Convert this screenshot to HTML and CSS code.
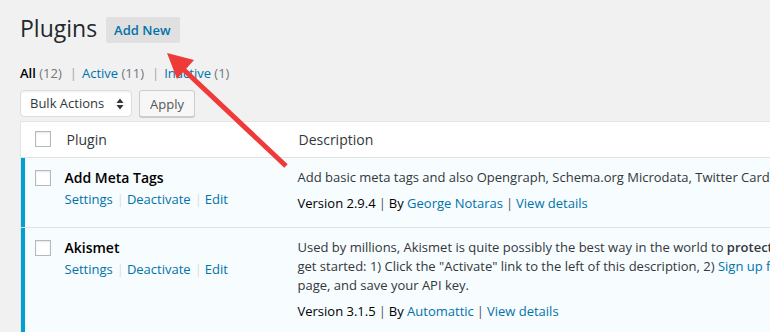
FILE: index.html
```html
<!DOCTYPE html>
<html lang="en">

<head>
    <meta charset="UTF-8">
    <title>Plugins</title>
    <link rel="stylesheet" href="styles.css">
</head>

<body>

    <div class="wrap">
        <div class="page-title">
            <h1>Plugins</h1>
            <a class="title-action">Add New</a>
        </div>

        <!-- Filters -->
        <ul class="subsubsub">
            <li><a class="current">All <span class="count">(12)</span></a><span class="sep">|</span></li>
            <li><a>Active <span class="count">(11)</span></a><span class="sep">|</span></li>
            <li><a>Inactive <span class="count">(1)</span></a></li>
        </ul>

        <!-- Bulk actions -->
        <div class="tablenav">
            <div class="select">
                Bulk Actions
                <svg class="select-arrows" width="8" height="12" viewBox="0 0 8 12">
                    <path d="M4 0.5 L7.5 5 L0.5 5 Z" fill="#32373c" />
                    <path d="M4 11.5 L7.5 7 L0.5 7 Z" fill="#32373c" />
                </svg>
            </div>
            <button class="button">Apply</button>
        </div>

        <!-- Plugins table -->
        <table class="plugins">
            <colgroup>
                <col class="col-check">
                <col class="col-name">
                <col class="col-desc">
            </colgroup>
            <thead>
                <tr>
                    <th class="check-column"><span class="checkbox"></span></th>
                    <th>Plugin</th>
                    <th>Description</th>
                </tr>
            </thead>
            <tbody>
                <tr class="active">
                    <th class="check-column"><span class="checkbox"></span></th>
                    <td class="plugin-title">
                        <strong>Add Meta Tags</strong>
                        <div class="row-actions">
                            <a>Settings</a><span class="sep">|</span><a>Deactivate</a><span class="sep">|</span><a>Edit</a>
                        </div>
                    </td>
                    <td class="plugin-desc">
                        <p>Add basic meta tags and also Opengraph, Schema.org Microdata, Twitter Cards and Dublin Core metadata to your website.</p>
                        <div class="plugin-meta">
                            Version 2.9.4<span class="bar">|</span>By <a>George Notaras</a><span class="bar">|</span><a>View details</a>
                        </div>
                    </td>
                </tr>
                <tr class="active">
                    <th class="check-column"><span class="checkbox"></span></th>
                    <td class="plugin-title">
                        <strong>Akismet</strong>
                        <div class="row-actions">
                            <a>Settings</a><span class="sep">|</span><a>Deactivate</a><span class="sep">|</span><a>Edit</a>
                        </div>
                    </td>
                    <td class="plugin-desc">
                        <p>Used by millions, Akismet is quite possibly the best way in the world to <strong>protect your blog from spam</strong>. It keeps your site protected even while you sleep. To<br>
                            get started: 1) Click the "Activate" link to the left of this description, 2) <a>Sign up for an Akismet plan</a> to get an API key, and 3) Go to your Akismet configuration<br>
                            page, and save your API key.</p>
                        <div class="plugin-meta">
                            Version 3.1.5<span class="bar">|</span>By <a>Automattic</a><span class="bar">|</span><a>View details</a>
                        </div>
                    </td>
                </tr>
            </tbody>
        </table>
    </div>

    <!-- Annotation arrow -->
    <svg class="annotation" width="770" height="332" viewBox="0 0 770 332">
        <line x1="286" y1="166" x2="183" y2="69" stroke="#ef3a3a" stroke-width="5" />
        <polygon points="167,53 194,60 177,79" fill="#ef3a3a" />
    </svg>

</body>

</html>
```

FILE: styles.css
```css
html,
body {
    margin: 0;
    overflow: hidden;
}

body {
    position: relative;
    background-color: #f1f1f1;
    color: #444;
    font-family: 'Open Sans', 'Liberation Sans', sans-serif;
    font-size: 13px;
    line-height: 1.5;
    width: 770px;
    height: 332px;
}

a {
    color: #0073aa;
    text-decoration: none;
}

.wrap {
    padding: 14px 0 0 20px;
}

.page-title {
    display: flex;
    align-items: flex-start;
}

.page-title h1 {
    margin: 0;
    font-size: 23px;
    font-weight: 400;
    line-height: 29px;
    color: #23282d;
}

.title-action {
    margin: 3px 0 0 9px;
    padding: 4px 9px 4px 8px;
    background-color: #e0e0e0;
    border-radius: 2px;
    font-weight: 600;
    line-height: 18px;
}

.subsubsub {
    list-style: none;
    display: flex;
    margin: 20px 0 0;
    padding: 0;
    line-height: 20px;
}

.subsubsub .current {
    color: #000;
    font-weight: 600;
}

.subsubsub .count {
    color: #72777c;
    font-weight: 400;
}

.subsubsub .sep {
    color: #a0a5aa;
    margin: 0 5px 0 8px;
}

.tablenav {
    display: flex;
    gap: 7px;
    margin-top: 7px;
    height: 27px;
}

.select {
    box-sizing: border-box;
    width: 112px;
    height: 27px;
    display: flex;
    align-items: center;
    justify-content: space-between;
    padding: 0 7px 0 9px;
    background-color: #fff;
    border: 1px solid #ddd;
    border-radius: 4px;
    box-shadow: inset 0 1px 2px rgba(0, 0, 0, .07);
    color: #32373c;
}

.button {
    box-sizing: border-box;
    height: 27px;
    padding: 0 10px;
    background-color: #f7f7f7;
    border: 1px solid #ccc;
    border-radius: 3px;
    box-shadow: 0 1px 0 #ccc;
    color: #555;
    font-family: inherit;
    font-size: 13px;
}

.plugins {
    margin-top: 4px;
    width: 1080px;
    table-layout: fixed;
    border-collapse: collapse;
    background-color: #fff;
    border: 1px solid #e5e5e5;
}

.col-check {
    width: 36px;
}

.col-name {
    width: 232px;
}

.plugins th,
.plugins td {
    text-align: left;
    vertical-align: top;
    font-weight: 400;
}

.plugins thead th {
    padding: 8px 10px;
    color: #32373c;
    font-size: 14px;
    line-height: 19px;
    border-bottom: 1px solid #e1e1e1;
}

.plugins thead th.check-column {
    padding: 9px 0 0 14px;
}

.plugins tbody tr {
    background-color: #f7fcfe;
    border-bottom: 1px solid #e1e1e1;
}

.plugins tbody th.check-column {
    padding: 12px 0 0 14px;
    box-shadow: inset 4px 0 0 #00a0d2;
}

.checkbox {
    display: block;
    box-sizing: border-box;
    width: 16px;
    height: 16px;
    background-color: #fff;
    border: 1px solid #b4b9be;
    box-shadow: inset 0 1px 2px rgba(0, 0, 0, .1);
}

.plugin-title {
    padding: 10px 8px;
}

.plugin-title strong {
    display: block;
    font-size: 14px;
    font-weight: 600;
    line-height: 20px;
    color: #000;
}

.row-actions {
    margin-top: 1px;
    line-height: 20px;
}

.row-actions .sep {
    color: #ddd;
    margin: 0 3px 0 4px;
}

.plugin-desc {
    padding: 10px 9px 14px;
    color: #32373c;
    white-space: nowrap;
}

.plugin-desc p {
    margin: 0 0 7px;
    line-height: 19px;
}

.plugin-desc strong {
    font-weight: 600;
}

.plugin-meta {
    line-height: 19px;
    color: #000;
}

.plugin-meta .bar {
    color: #555;
    margin: 0 3px;
}

.annotation {
    position: absolute;
    top: 0;
    left: 0;
    pointer-events: none;
}
```
